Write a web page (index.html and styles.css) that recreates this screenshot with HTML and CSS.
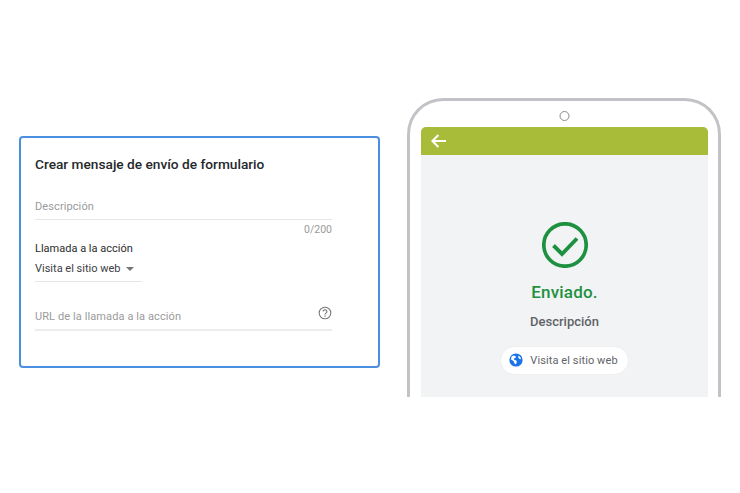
FILE: index.html
```html
<!DOCTYPE html>
<html lang="es">
<head>
    <meta charset="UTF-8">
    <title>Crear mensaje de envío de formulario</title>
    <link rel="stylesheet" href="styles.css">
</head>
<body>
    <div class="stage">
        <div class="form-card">
            <div class="form-title">Crear mensaje de envío de formulario</div>
            <div class="field field-desc">
                <span class="placeholder">Descripción</span>
            </div>
            <div class="counter">0/200</div>
            <div class="cta-label">Llamada a la acción</div>
            <div class="select-row">
                <span class="select-value">Visita el sitio web</span>
                <span class="select-arrow"></span>
            </div>
            <div class="field field-url">
                <span class="placeholder">URL de la llamada a la acción</span>
                <svg class="help-icon" viewBox="0 0 24 24" width="14" height="14" fill="none" stroke="#757575">
                    <circle cx="12" cy="12" r="10" stroke-width="1.8"/>
                    <path d="M8.8 9.6a3.2 3.2 0 1 1 4.9 2.7c-1.1.7-1.7 1.3-1.7 2.6" stroke-width="1.8"/>
                    <path d="M12 16.4v2" stroke-width="2"/>
                </svg>
            </div>
        </div>
        <div class="phone">
            <div class="camera"></div>
            <div class="screen">
                <div class="screen-bar">
                    <svg class="back-icon" viewBox="0 0 16 14" width="16" height="14" fill="none" stroke="#fff" stroke-width="2">
                        <path d="M15 7H1.6M7.4 1 1.4 7l6 6"/>
                    </svg>
                </div>
                <div class="screen-body">
                    <svg class="check-icon" viewBox="0 0 46 46" width="46" height="46" fill="none" stroke="#1e9141">
                        <circle cx="23" cy="23" r="21.2" stroke-width="3.7"/>
                        <path d="M11.5 23.5 20 32l15-15.5" stroke-width="3.9"/>
                    </svg>
                    <div class="sent-title">Enviado.</div>
                    <div class="sent-desc">Descripción</div>
                    <div class="site-btn">
                        <svg class="globe-icon" viewBox="0 0 14 14" width="14" height="14">
                            <circle cx="7" cy="7" r="6.6" fill="#1a73e8"/>
                            <path d="M2.6 3.2 5 2.4l2 1-.6 1.5-1.5.5.4 1.5 1.7.3.9 1.4-.9 2.6-1.3-.5L4.5 8 2 6.5z" fill="#fff"/>
                            <path d="M9.6 2.6l1.8 1.6.7 2-1.5-.2-1.4-1.6z" fill="#fff"/>
                        </svg>
                        <span>Visita el sitio web</span>
                    </div>
                </div>
            </div>
        </div>
    </div>
</body>
</html>
```

FILE: styles.css
```css
html, body {
    height: 100%;
}
body {
    margin: 0;
    background: #fff;
    font-family: Roboto, Arial, sans-serif;
    color: #3c4043;
    overflow: hidden;
}
.stage {
    display: flex;
    align-items: flex-start;
    gap: 27px;
    padding: 98px 0 0 19px;
}
.form-card {
    width: 361px;
    height: 232px;
    margin-top: 38px;
    padding: 17px 0 0 14px;
    border: 2px solid #4a8fe0;
    border-radius: 4px;
    box-sizing: border-box;
}
.form-title {
    font-size: 13.7px;
    font-weight: 500;
    line-height: 18px;
    color: #25282b;
}
.field {
    display: flex;
    align-items: center;
    justify-content: space-between;
    width: 297px;
    border-bottom: 1px solid #e6e6e6;
    box-sizing: border-box;
}
.field-desc {
    height: 29px;
    margin-top: 18px;
}
.field-url {
    height: 30px;
    margin-top: 19px;
    border-bottom-width: 2px;
    border-color: #ececec;
}
.placeholder {
    font-size: 11px;
    letter-spacing: 0.1px;
    color: #9a9a9a;
}
.field-desc .placeholder {
    margin-top: 2px;
}
.field-url .placeholder {
    margin-top: 3px;
}
.help-icon {
    margin: 0 0 5px 0;
}
.counter {
    margin-top: 3px;
    width: 297px;
    font-size: 10.5px;
    line-height: 13px;
    text-align: right;
    color: #9a9a9a;
}
.cta-label {
    margin-top: 6px;
    font-size: 11px;
    line-height: 14px;
    color: #2b2b2b;
}
.select-row {
    display: flex;
    align-items: center;
    gap: 6px;
    width: 107px;
    height: 24px;
    margin-top: 2px;
    padding-bottom: 2px;
    font-size: 11px;
    color: #3c4043;
    border-bottom: 1px solid #e6e6e6;
    box-sizing: border-box;
}
.select-value {
    white-space: nowrap;
}
.select-arrow {
    width: 0;
    height: 0;
    border-left: 4.5px solid transparent;
    border-right: 4.5px solid transparent;
    border-top: 4.5px solid #757575;
}
.phone {
    width: 314px;
    height: 299px;
    padding: 0 10.5px;
    border: solid #c3c3c7;
    border-width: 3.5px 3.5px 0;
    border-radius: 36px 36px 0 0;
    box-sizing: border-box;
}
.camera {
    width: 10px;
    height: 10px;
    margin: 10px auto 5.5px;
    transform: translateX(0.5px);
    border: 1px solid #8a8a8a;
    border-radius: 50%;
    box-sizing: border-box;
}
.screen {
    display: flex;
    flex-direction: column;
    height: 270px;
    background: #f1f3f4;
    border-radius: 5px 5px 0 0;
}
.screen-bar {
    display: flex;
    align-items: center;
    height: 28px;
    padding-left: 10px;
    background: #a8bc3a;
    border-radius: 5px 5px 0 0;
    box-sizing: border-box;
}
.screen-body {
    display: flex;
    flex-direction: column;
    align-items: center;
    padding: 67px 0 0 1px;
}
.sent-title {
    margin-top: 13px;
    font-size: 17px;
    font-weight: 500;
    line-height: 22px;
    letter-spacing: 0.2px;
    color: #1e9141;
}
.sent-desc {
    margin-top: 11px;
    font-size: 13px;
    font-weight: 500;
    line-height: 16px;
    color: #5f6368;
}
.site-btn {
    display: flex;
    align-items: center;
    gap: 7px;
    height: 29px;
    margin-top: 16px;
    padding: 0 10px 0 8px;
    background: #fff;
    border: 1px solid #eceef0;
    border-radius: 15px;
    box-sizing: border-box;
    font-size: 11px;
    letter-spacing: 0.1px;
    color: #5f6368;
}
```
